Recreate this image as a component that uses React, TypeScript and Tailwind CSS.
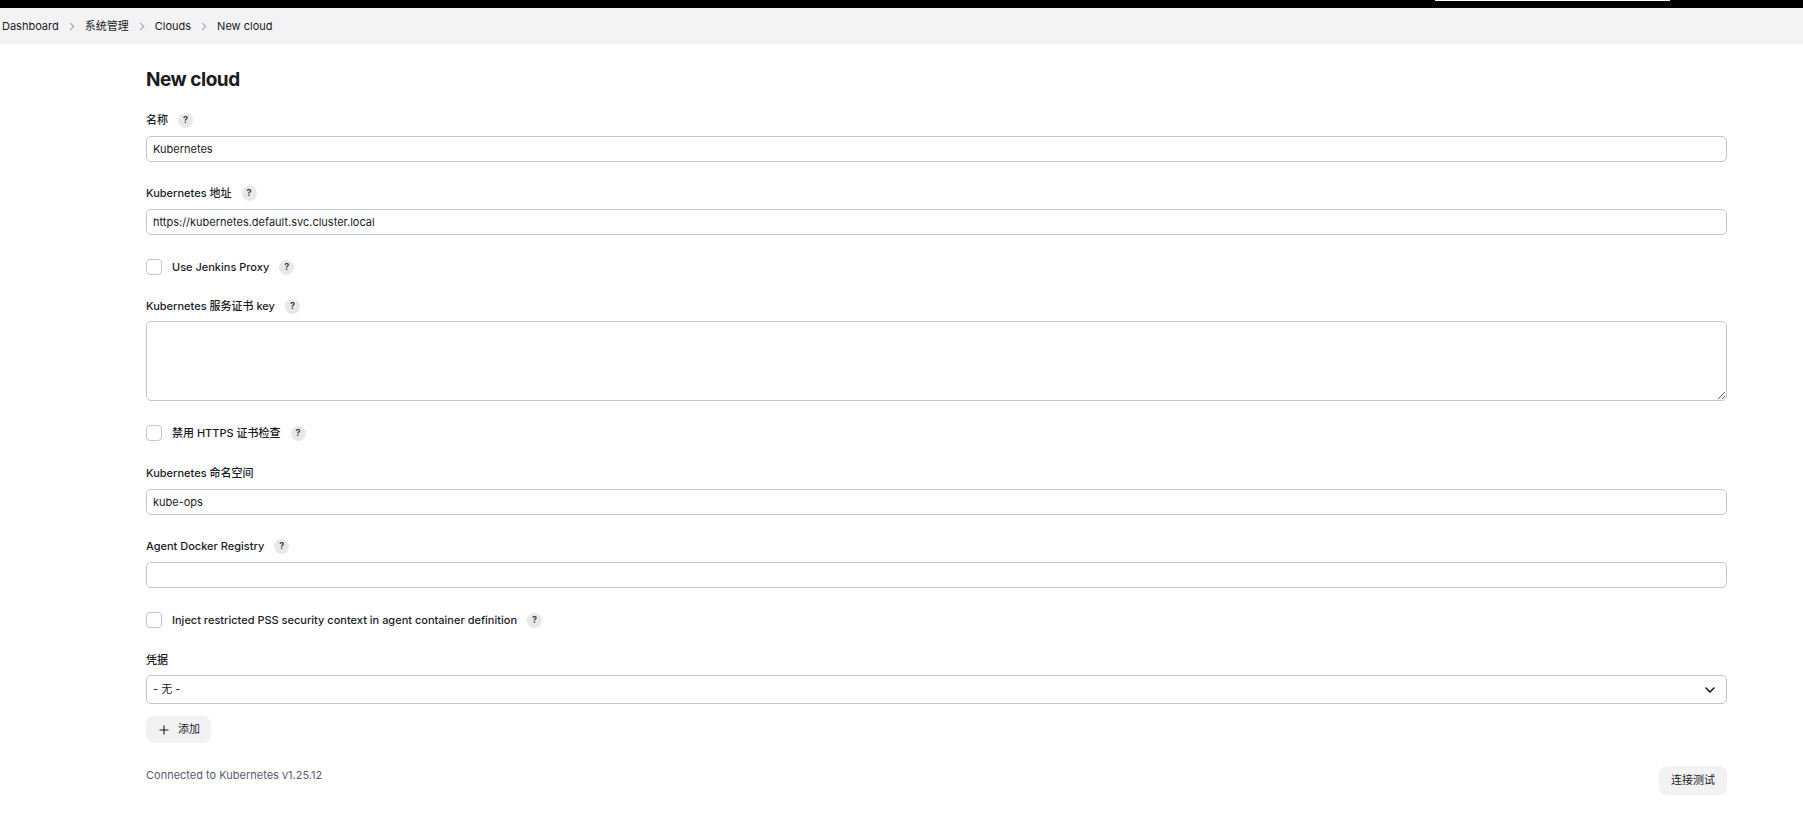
import { useState } from 'react'

const font = { fontFamily: 'Inter, "Noto Sans CJK SC", sans-serif' }

function Help() {
  return (
    <span className="ml-[10px] inline-flex h-[15px] w-[15px] items-center justify-center rounded-full bg-[#e8e8eb] text-[9px] font-bold text-[#3f3f47]">
      ?
    </span>
  )
}

function Crumb({ children, last }: { children: string; last?: boolean }) {
  return (
    <>
      <span className="text-[#1b1b1f]">{children}</span>
      {!last && (
        <svg className="mx-[10px] h-[9px] w-[6px] text-[#a5a5ad]" viewBox="0 0 6 9" fill="none" stroke="currentColor" strokeWidth={1.1}>
          <path d="M1 0.8 4.7 4.5 1 8.2" />
        </svg>
      )}
    </>
  )
}

function Label({ text, help = true }: { text: string; help?: boolean }) {
  return (
    <div className="flex h-[18px] items-center text-[11px] font-medium text-[#1b1b1f]">
      {text}
      {help && <Help />}
    </div>
  )
}

function TextField({ label, value, help = true }: { label: string; value: string; help?: boolean }) {
  const [v, setV] = useState(value)
  return (
    <div className="mt-[22px] first:mt-0">
      <Label text={label} help={help} />
      <input
        value={v}
        onChange={(e) => setV(e.target.value)}
        className="mt-[7px] block h-[26px] w-full rounded-[5px] border border-[#bfc8ce] px-[6px] text-[11px] text-[#1b1b1f] outline-none"
      />
    </div>
  )
}

function Check({ label }: { label: string }) {
  const [on, setOn] = useState(false)
  return (
    <label className="mt-[23px] flex h-[18px] items-center text-[11px] font-medium text-[#1b1b1f]">
      <button
        type="button"
        onClick={() => setOn(!on)}
        className={`mr-[10px] h-[16px] w-[16px] rounded-[4px] border ${on ? 'border-[#1b1b1f] bg-[#1b1b1f]' : 'border-[#bfc8ce] bg-white'}`}
      />
      {label}
      <Help />
    </label>
  )
}

export default function App() {
  return (
    <div className="min-h-screen bg-white" style={font}>
      <div className="flex h-[8px] justify-end bg-black pr-[133px]">
        <div className="h-[1px] w-[235px] bg-white" />
      </div>

      <nav className="flex h-[36px] items-center bg-[#f3f3f5] pl-[2px] text-[11px]">
        <Crumb>Dashboard</Crumb>
        <Crumb>系统管理</Crumb>
        <Crumb>Clouds</Crumb>
        <Crumb last>New cloud</Crumb>
      </nav>

      <main className="pl-[146px] pr-[76px]">
        <h1 className="mt-[22px] h-[28px] text-[19px] leading-[28px] font-bold tracking-tight text-[#1b1b1f]">New cloud</h1>

        <div className="mt-[17px]">
          <TextField label="名称" value="Kubernetes" />
          <TextField label="Kubernetes 地址" value="https://kubernetes.default.svc.cluster.local" />
          <Check label="Use Jenkins Proxy" />

          <div className="mt-[21px]">
            <Label text="Kubernetes 服务证书 key" />
            <textarea className="mt-[6px] block h-[80px] w-full rounded-[5px] border border-[#bfc8ce] px-[6px] py-[4px] text-[11px] outline-none" />
          </div>

          <Check label="禁用 HTTPS 证书检查" />
          <TextField label="Kubernetes 命名空间" value="kube-ops" help={false} />
          <TextField label="Agent Docker Registry" value="" />
          <Check label="Inject restricted PSS security context in agent container definition" />

          <div className="mt-[22px]">
            <Label text="凭据" help={false} />
            <div className="relative mt-[6px]">
              <select className="block h-[29px] w-full appearance-none rounded-[5px] border border-[#bfc8ce] bg-white px-[6px] text-[11px] text-[#1b1b1f] outline-none">
                <option>- 无 -</option>
              </select>
              <svg className="pointer-events-none absolute top-[12px] right-[12px] h-[6px] w-[10px] text-[#1b1b1f]" viewBox="0 0 10 6" fill="none" stroke="currentColor" strokeWidth={1.6} strokeLinecap="round" strokeLinejoin="round">
                <path d="M1 1l4 4 4-4" />
              </svg>
            </div>
            <button className="mt-[12px] flex h-[27px] items-center gap-[9px] rounded-[8px] bg-[#f2f2f4] pr-[11px] pl-[13px] text-[11px] text-[#1b1b1f]">
              <svg className="h-[10px] w-[10px]" viewBox="0 0 10 10" fill="none" stroke="currentColor" strokeWidth={1.1}>
                <path d="M5 0.5v9M0.5 5h9" />
              </svg>
              添加
            </button>
          </div>

          <div className="mt-[23px] flex items-start justify-between">
            <span className="mt-[1px] text-[11px] leading-[16px] text-[#5d5a73]">Connected to Kubernetes v1.25.12</span>
            <button className="h-[29px] rounded-[8px] bg-[#f2f2f4] px-[12px] text-[11px] text-[#1b1b1f]">连接测试</button>
          </div>
        </div>
      </main>
    </div>
  )
}
